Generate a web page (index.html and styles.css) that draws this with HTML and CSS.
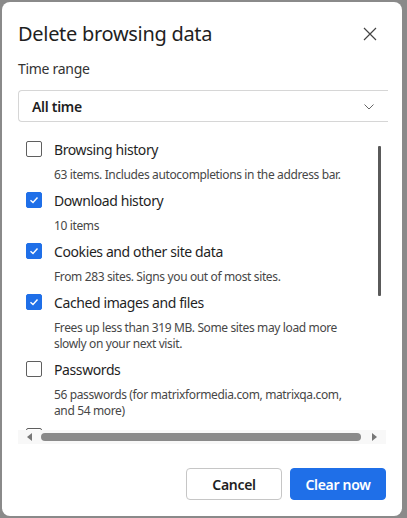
FILE: index.html
```html
<!DOCTYPE html>
<html>
<head>
<meta charset="utf-8">
<link rel="stylesheet" href="styles.css">
</head>
<body>
<div class="dialog">
  <div class="header">
    <h1 class="title">Delete browsing data</h1>
    <button class="close" aria-label="Close">
      <svg width="14" height="14" viewBox="0 0 14 14"><path d="M1 1L13 13M13 1L1 13" stroke="#444" stroke-width="1.2" fill="none"/></svg>
    </button>
  </div>
  <div class="field-label">Time range</div>
  <div class="select">
    <span>All time</span>
    <svg class="chev" width="10" height="6" viewBox="0 0 10 6"><path d="M0.5 0.5L5 5L9.5 0.5" stroke="#666" stroke-width="1" fill="none"/></svg>
  </div>
  <div class="list-wrap">
    <div class="list">
      <div class="item">
        <div class="row"><span class="cb"></span><span class="label">Browsing history</span></div>
        <div class="desc">63 items. Includes autocompletions in the address bar.</div>
      </div>
      <div class="item">
        <div class="row"><span class="cb on"><svg width="10" height="8" viewBox="0 0 10 8"><path d="M1.5 4.2L4 6.5L8.5 1.5" stroke="#fff" stroke-width="1.4" fill="none"/></svg></span><span class="label">Download history</span></div>
        <div class="desc">10 items</div>
      </div>
      <div class="item">
        <div class="row"><span class="cb on"><svg width="10" height="8" viewBox="0 0 10 8"><path d="M1.5 4.2L4 6.5L8.5 1.5" stroke="#fff" stroke-width="1.4" fill="none"/></svg></span><span class="label">Cookies and other site data</span></div>
        <div class="desc">From 283 sites. Signs you out of most sites.</div>
      </div>
      <div class="item">
        <div class="row"><span class="cb on"><svg width="10" height="8" viewBox="0 0 10 8"><path d="M1.5 4.2L4 6.5L8.5 1.5" stroke="#fff" stroke-width="1.4" fill="none"/></svg></span><span class="label">Cached images and files</span></div>
        <div class="desc">Frees up less than 319 MB. Some sites may load more slowly on your next visit.</div>
      </div>
      <div class="item">
        <div class="row"><span class="cb"></span><span class="label">Passwords</span></div>
        <div class="desc">56 passwords (for matrixformedia.com, matrixqa.com, and 54 more)</div>
      </div>
      <div class="item">
        <div class="row"><span class="cb"></span></div>
      </div>
    </div>
    <div class="vthumb"></div>
  </div>
  <div class="hscroll">
    <svg class="arrow" width="5" height="8" viewBox="0 0 5 8"><path d="M5 0L0 4L5 8Z" fill="#777"/></svg>
    <div class="hthumb"></div>
    <svg class="arrow" width="5" height="8" viewBox="0 0 5 8"><path d="M0 0L5 4L0 8Z" fill="#777"/></svg>
  </div>
  <div class="footer">
    <button class="btn cancel">Cancel</button>
    <button class="btn primary">Clear now</button>
  </div>
</div>
</body>
</html>
```

FILE: styles.css
```css
* { box-sizing: border-box; }
html, body { margin: 0; padding: 0; }
body {
  background: #8a8a8a;
  font-family: "Noto Sans", "Open Sans", sans-serif;
  color: #1f1f1f;
  width: 407px;
  height: 518px;
  overflow: hidden;
}
.dialog {
  margin: 2px;
  width: 400px;
  height: 514px;
  background: #fff;
  border-radius: 8px;
  padding: 20px 16px 16px 16px;
  display: flex;
  flex-direction: column;
}
.header {
  display: flex;
  align-items: center;
  justify-content: space-between;
  height: 24px;
}
.title {
  margin: 0;
  font-size: 20px;
  font-weight: 400;
  line-height: 24px;
  letter-spacing: -0.3px;
  color: #1f1f1f;
}
.close {
  border: 0;
  background: none;
  padding: 0;
  margin-right: 9px;
  width: 14px;
  height: 14px;
  display: flex;
}
.field-label {
  margin-top: 13px;
  font-size: 14px;
  line-height: 20px;
  letter-spacing: -0.3px;
  color: #333;
}
.select {
  margin-top: 11px;
  height: 32px;
  width: 370px;
  border: 1px solid #d6d6d6;
  border-right: 0;
  border-radius: 4px 0 0 4px;
  display: flex;
  align-items: center;
  justify-content: space-between;
  padding: 0 14px 0 13px;
  font-size: 14px;
  font-weight: 600;
  letter-spacing: -0.3px;
}
.chev { margin-top: 1px; }
.list-wrap {
  position: relative;
  height: 308px;
  overflow: hidden;
}
.list {
  padding: 17px 0 0 8px;
}
.item {
  padding-bottom: 7px;
}
.row {
  display: flex;
  align-items: center;
  height: 20px;
}
.cb {
  width: 16px;
  height: 16px;
  border: 1px solid #5f5f5f;
  border-radius: 2px;
  margin-right: 12px;
  flex: none;
  display: flex;
  align-items: center;
  justify-content: center;
}
.cb.on {
  background: #1f6fe8;
  border-color: #1f6fe8;
}
.label {
  font-size: 14px;
  letter-spacing: -0.4px;
  color: #1f1f1f;
}
.desc {
  margin-top: 8px;
  margin-left: 28px;
  font-size: 12px;
  line-height: 16px;
  letter-spacing: -0.37px;
  color: #474747;
  max-width: 300px;
}
.vthumb {
  position: absolute;
  right: 5px;
  top: 24px;
  width: 3px;
  height: 150px;
  background: #5a5a5a;
  border-radius: 1px;
}
.hscroll {
  height: 14px;
  background: #f8f8f8;
  display: flex;
  align-items: center;
  padding: 0 9px 0 9px;
  gap: 9px;
}
.hthumb {
  flex: 1;
  height: 8px;
  background: #8a8a8a;
  border-radius: 4px;
  margin-right: 2px;
}
.footer {
  margin-top: auto;
  display: flex;
  justify-content: flex-end;
  gap: 8px;
}
.btn {
  height: 32px;
  width: 96px;
  border-radius: 4px;
  font-family: inherit;
  font-size: 14px;
  font-weight: 600;
  letter-spacing: -0.3px;
  padding: 0;
}
.cancel {
  background: #fff;
  border: 1px solid #c6c6c6;
  color: #1f1f1f;
}
.primary {
  background: #1f6fe8;
  border: 1px solid #1f6fe8;
  color: #fff;
}
```
